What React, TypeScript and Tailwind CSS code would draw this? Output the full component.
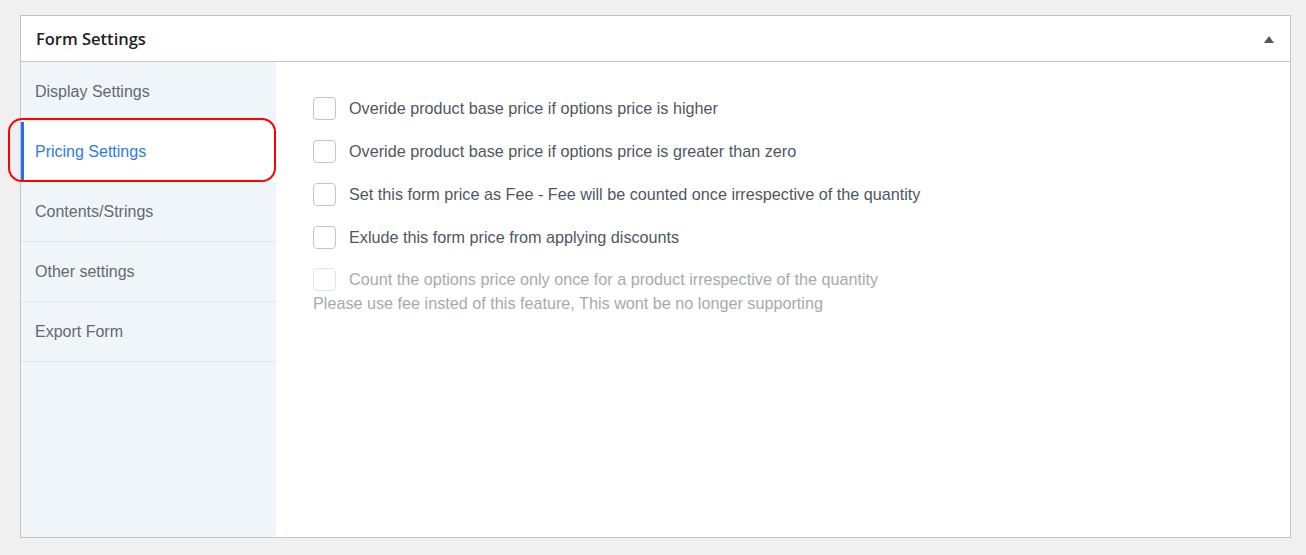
const menu = [
  "Display Settings",
  "Pricing Settings",
  "Contents/Strings",
  "Other settings",
  "Export Form",
];

const options = [
  "Overide product base price if options price is higher",
  "Overide product base price if options price is greater than zero",
  "Set this form price as Fee - Fee will be counted once irrespective of the quantity",
  "Exlude this form price from applying discounts",
];

function Checkbox({ disabled }: { disabled?: boolean }) {
  return (
    <span
      className={`inline-block w-[23px] h-[23px] shrink-0 rounded-[4px] border bg-white ${
        disabled ? "border-[#e2e4e7]" : "border-[#c3c4c7]"
      }`}
    />
  );
}

export default function App() {
  const active = 1;

  return (
    <div
      className="w-[1306px] h-[555px] bg-[#f0f0f1] pt-[15px] pl-[20px] pr-[15px]"
      style={{ fontFamily: '"Liberation Sans", Arial, sans-serif' }}
    >
      <div className="relative w-[1271px] h-[523px] bg-white border border-[#c3c4c7] flex flex-col">
        {/* header */}
        <div className="h-[46px] shrink-0 border-b border-[#c3c4c7] flex items-center justify-between pl-[15px] pr-[16px] pt-[1px]">
          <h2
            className="text-[16.5px] font-semibold text-[#1d2327]"
            style={{ fontFamily: '"Open Sans", "Noto Sans", sans-serif' }}
          >
            Form Settings
          </h2>
          <svg width="10" height="7" viewBox="0 0 10 7">
            <path d="M5 0 L10 7 L0 7 Z" fill="#50575e" />
          </svg>
        </div>

        <div className="flex flex-1 min-h-0">
          {/* side menu */}
          <div className="w-[255px] shrink-0 bg-[#f0f5fa]">
            {menu.map((item, i) => (
              <div
                key={item}
                className={`h-[60px] flex items-center text-[16px] border-b ${
                  i === active
                    ? "bg-white border-l-[3px] border-l-[#2271f5] pl-[11px] text-[#2d7be6] border-b-white"
                    : "pl-[14px] text-[#646970] border-b-[#e2e8ef]"
                } ${i === 0 ? "border-b-0" : ""}`}
              >
                {item}
              </div>
            ))}
          </div>

          {/* pricing options */}
          <div className="flex-1 pl-[37px] pt-[34px]">
            <div className="flex flex-col gap-[19px]">
              {options.map((o) => (
                <label key={o} className="flex items-center gap-[13px] text-[16.2px] leading-[24px] text-[#50575e]">
                  <Checkbox />
                  <span>{o}</span>
                </label>
              ))}
            </div>
            <label className="mt-[18px] flex items-center gap-[13px] text-[16.2px] leading-[24px] text-[#a7aaad]">
              <Checkbox disabled />
              <span>Count the options price only once for a product irrespective of the quantity</span>
            </label>
            <p className="text-[16.2px] text-[#a7aaad] leading-[20px] mt-[2px]">
              Please use fee insted of this feature, This wont be no longer supporting
            </p>
          </div>
        </div>

        {/* red annotation around the active tab */}
        <div className="absolute left-[-13px] top-[102px] w-[268px] h-[64px] rounded-[14px] border-[2.5px] border-[#ff0000] pointer-events-none" />
      </div>
    </div>
  );
}
